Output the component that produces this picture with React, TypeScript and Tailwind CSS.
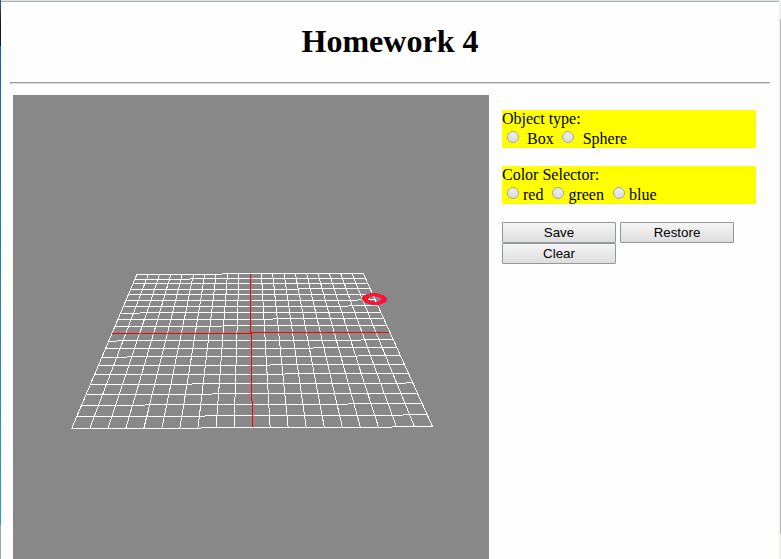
import React from "react";

// Each grid row: its y at the left edge, then the x positions where it climbs one pixel.
const ROWS: [number, number[]][] = [
  [274, [222]], [279, [190]], [283, []], [289, [298]], [294, []], [300, [358]], [306, [348]],
  [313, [140]], [319, [273]], [326, [222]], [333, [251]], [341, [117, 361]], [348, [313]],
  [357, [127, 358]], [365, [270]], [374, [285]], [384, [192, 406]], [394, [212]],
  [405, [145, 348]], [416, [205, 403]], [428, [201, 392]],
];

const leftX = (y: number) => Math.round(136.7 - ((y - 274) * 65.2) / 154);
const rightX = (y: number) => Math.round(363 + ((y - 273) * 69.5) / 153);

function rowPath([y, steps]: [number, number[]]) {
  let d = `M${leftX(y)} ${y + 0.5}`;
  let level = y + 0.5;
  for (const x of steps) {
    level -= 1;
    d += `H${x}M${x} ${level}`;
  }
  return `${d}H${rightX(level)}`;
}

function Plane() {
  const cols = Array.from({ length: 21 }, (_, i) => i);
  return (
    <svg width="476" height="464" viewBox="13 95 476 464" className="block" shapeRendering="crispEdges" fill="none">
      <g stroke="#fff" strokeWidth="1">
        {ROWS.map((row, i) => (i === 10 ? null : <path key={i} d={rowPath(row)} />))}
        {cols.map((i) =>
          i === 10 ? null : (
            <line key={i} x1={136.9 + i * 11.32} y1={274.5 - i * 0.05} x2={71.7 + i * 18.04} y2={428.5 - i * 0.1} />
          ),
        )}
      </g>
      <path stroke="#f00" d="M112 333.5H251M251 332.5H389M250.5 274V333M251.5 333V401M252.5 401V427" />
      <path
        fill="#ff1236"
        fillRule="evenodd"
        transform="rotate(3 374.5 299)"
        d="M362 299a12.5 5.9 0 1 0 25 0a12.5 5.9 0 1 0 -25 0ZM368 299a6.5 2.6 0 1 0 13 0a6.5 2.6 0 1 0 -13 0Z"
      />
    </svg>
  );
}

function Radio({ name, className }: { name: string; className: string }) {
  return (
    <input
      type="radio"
      name={name}
      className={`h-3 w-3 shrink-0 appearance-none rounded-full border border-[#a6a6a6] bg-linear-to-b from-[#eeeeee] to-[#dcdcdc] checked:bg-[#555] ${className}`}
    />
  );
}

function Button({ children }: { children: React.ReactNode }) {
  return (
    <button className="h-[21px] w-[114px] rounded-[1px] border border-[#929999] bg-linear-to-b from-[#f5f5f5] to-[#dddddd] font-['Liberation_Sans',sans-serif] text-[13.33px] leading-[19px]">
      {children}
    </button>
  );
}

export default function App() {
  return (
    <div className="flex h-[559px] w-[781px] overflow-hidden bg-[#fefefe] font-['Liberation_Serif',serif] text-base text-black">
      <div className="flex w-px shrink-0 flex-col">
        <div className="h-[46px] bg-linear-to-b from-[#2468a0] via-[#15181e] to-[#15181e]" />
        <div className="grow bg-linear-to-b from-[#1763a8] to-[#389bbb]" />
        <div className="h-[34px] bg-[#9aa8a8]" />
      </div>
      <div className="flex w-[778px] shrink-0 flex-col">
        <div className="h-px shrink-0 bg-[#dce8e8]" />
        <div className="h-px shrink-0 bg-[#aaaaaa]" />
        <h1 className="mt-[21px] h-[37px] shrink-0 text-center text-[32px] leading-[37px] font-bold">Homework 4</h1>
        <hr className="mt-[22px] mr-[9px] ml-[9px] h-0.5 shrink-0 border border-t-[#999] border-r-[#ddd] border-b-[#ddd] border-l-[#999]" />
        <div className="mt-[11px] flex pl-3">
          <div className="h-[464px] w-[476px] shrink-0 bg-[#888888]">
            <Plane />
          </div>
          <div className="mt-[15px] ml-[13px] w-[254px]">
            <div className="h-[38px] bg-[#ffff00] leading-[18px]">
              <div className="h-[19px]">Object type:</div>
              <div className="flex h-[19px] pt-px">
                <Radio name="shape" className="mt-px ml-[5px]" />
                <span className="ml-2">Box</span>
                <Radio name="shape" className="mt-px ml-2" />
                <span className="ml-[9px]">Sphere</span>
              </div>
            </div>
            <div className="mt-[18px] h-[38px] bg-[#ffff00] leading-[18px]">
              <div className="h-[19px]">Color Selector:</div>
              <div className="flex h-[19px] pt-px">
                <Radio name="color" className="mt-px ml-[5px]" />
                <span className="ml-1">red</span>
                <Radio name="color" className="mt-px ml-[9px]" />
                <span className="ml-1">green</span>
                <Radio name="color" className="mt-px ml-[9px]" />
                <span className="ml-1">blue</span>
              </div>
            </div>
            <div className="mt-[18px] flex flex-wrap gap-x-1">
              <Button>Save</Button>
              <Button>Restore</Button>
              <Button>Clear</Button>
            </div>
          </div>
        </div>
      </div>
      <div className="flex w-0.5 flex-col bg-[#eef1e9]">
        <div className="mt-[19px] ml-px h-[515px] w-px bg-[#bbbbbb]" />
      </div>
    </div>
  );
}
